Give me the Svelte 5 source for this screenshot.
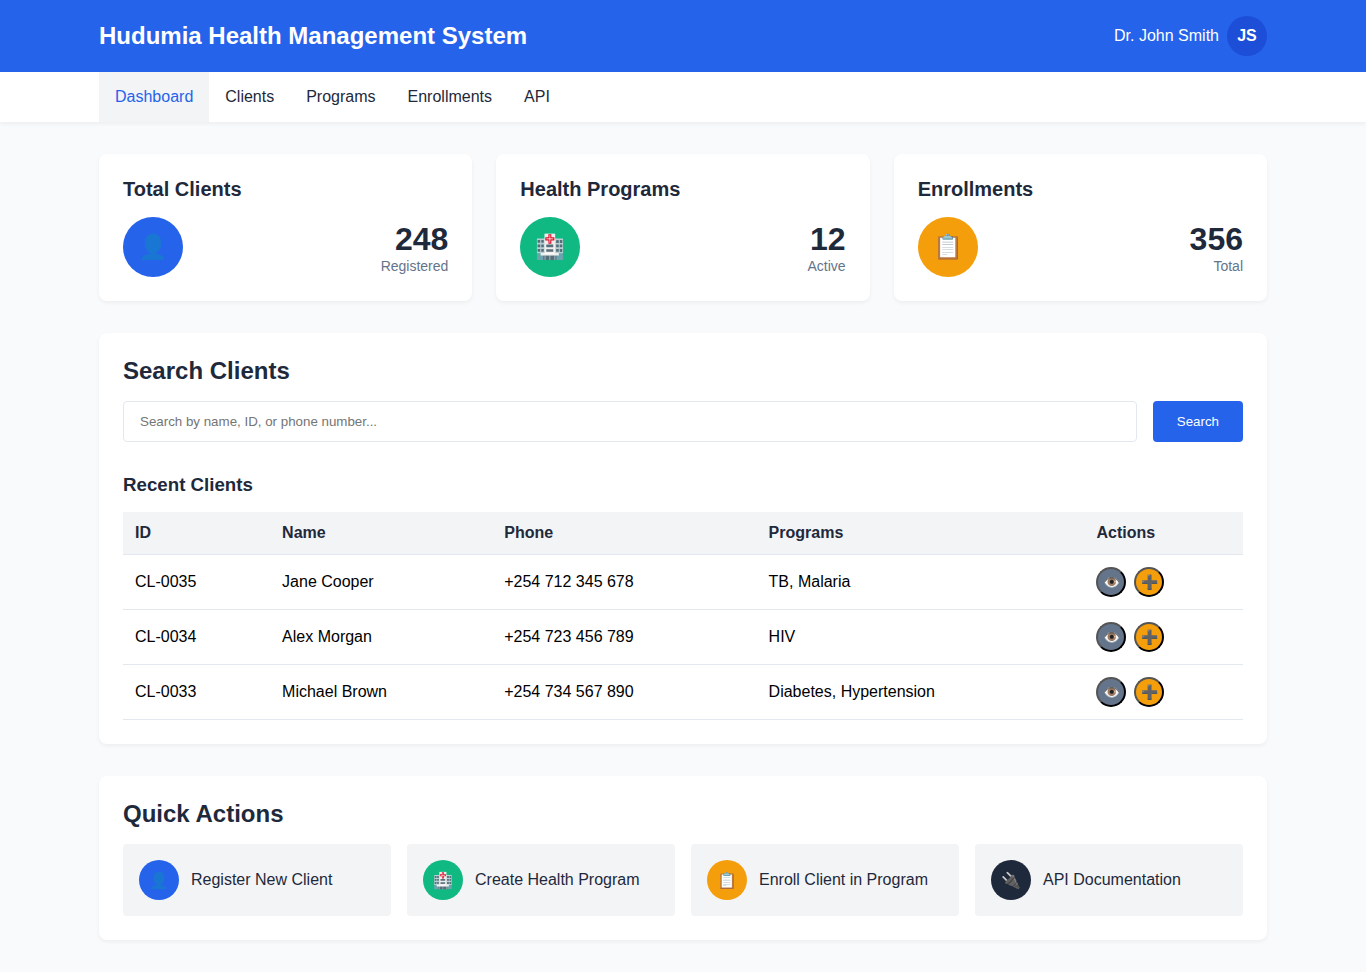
<script>
  const nav = ['Dashboard', 'Clients', 'Programs', 'Enrollments', 'API'];
  const stats = [
    { title: 'Total Clients', icon: '👤', tone: 'blue', value: 248, label: 'Registered' },
    { title: 'Health Programs', icon: '🏥', tone: 'green', value: 12, label: 'Active' },
    { title: 'Enrollments', icon: '📋', tone: 'orange', value: 356, label: 'Total' }
  ];
  const clients = [
    { id: 'CL-0035', name: 'Jane Cooper', phone: '+254 712 345 678', programs: 'TB, Malaria' },
    { id: 'CL-0034', name: 'Alex Morgan', phone: '+254 723 456 789', programs: 'HIV' },
    { id: 'CL-0033', name: 'Michael Brown', phone: '+254 734 567 890', programs: 'Diabetes, Hypertension' }
  ];
  const actions = [
    { icon: '👤', tone: 'blue', label: 'Register New Client' },
    { icon: '🏥', tone: 'green', label: 'Create Health Program' },
    { icon: '📋', tone: 'orange', label: 'Enroll Client in Program' },
    { icon: '🔌', tone: 'dark', label: 'API Documentation' }
  ];
  let query = $state('');
</script>

<header>
  <div class="container bar">
    <h1>Hudumia Health Management System</h1>
    <div class="user"><span>Dr. John Smith</span><div class="avatar">JS</div></div>
  </div>
</header>
<nav>
  <ul class="container">
    {#each nav as item, i}
      <li><a href="#{item.toLowerCase()}" class:active={i === 0}>{item}</a></li>
    {/each}
  </ul>
</nav>
<main class="container">
  <section class="stats">
    {#each stats as s}
      <article class="card">
        <h2 class="stat-title">{s.title}</h2>
        <div class="stat">
          <div class="icon large {s.tone}">{s.icon}</div>
          <div class="figures">
            <div class="value">{s.value}</div>
            <div class="label">{s.label}</div>
          </div>
        </div>
      </article>
    {/each}
  </section>

  <section class="card">
    <h2>Search Clients</h2>
    <form class="search" onsubmit={(e) => e.preventDefault()}>
      <input type="text" aria-label="Search clients" placeholder="Search by name, ID, or phone number..." bind:value={query} />
      <button type="submit">Search</button>
    </form>
    <h3>Recent Clients</h3>
    <table>
      <thead>
        <tr><th>ID</th><th>Name</th><th>Phone</th><th>Programs</th><th>Actions</th></tr>
      </thead>
      <tbody>
        {#each clients as c}
          <tr>
            <td>{c.id}</td><td>{c.name}</td><td>{c.phone}</td><td>{c.programs}</td>
            <td>
              <div class="row-actions">
                <button class="round view" aria-label="View {c.name}">👁️</button>
                <button class="round add" aria-label="Enroll {c.name}">➕</button>
              </div>
            </td>
          </tr>
        {/each}
      </tbody>
    </table>
  </section>

  <section class="card">
    <h2>Quick Actions</h2>
    <div class="quick">
      {#each actions as a}
        <a href="#{a.tone}" class="action"><span class="icon {a.tone}">{a.icon}</span><span>{a.label}</span></a>
      {/each}
    </div>
  </section>
</main>

<style>
  :global(body) {
    margin: 0;
    background: #f8fafc;
    color: #1e293b;
    font-family: "Liberation Sans", Arial, sans-serif;
    font-size: 16px;
  }
  * { box-sizing: border-box; }
  h1, h2, h3, ul { margin: 0; }
  a { color: inherit; text-decoration: none; }
  .container { max-width: 1200px; margin: 0 auto; padding: 0 16px; }
  header { background: #2563eb; color: #fff; padding: 16px 0; }
  .bar { display: flex; align-items: center; justify-content: space-between; }
  h1 { font-size: 24px; }
  .user { display: flex; align-items: center; gap: 8px; }
  .avatar {
    display: flex; align-items: center; justify-content: center;
    width: 40px; height: 40px; border-radius: 50%;
    background: #1d4ed8; font-weight: bold;
  }
  nav { background: #fff; box-shadow: 0 2px 4px rgba(0, 0, 0, 0.05); }
  nav ul { display: flex; list-style: none; }
  nav a { display: block; padding: 16px; line-height: 18px; }
  nav a.active { background: #f3f4f6; color: #2563eb; }
  main { display: flex; flex-direction: column; gap: 32px; }
  main.container { padding: 32px 16px; }
  .card { background: #fff; border-radius: 8px; padding: 24px; box-shadow: 0 2px 4px rgba(0, 0, 0, 0.05); }
  .stats { display: grid; grid-template-columns: repeat(3, 1fr); gap: 24px; }
  h2 { font-size: 24px; line-height: 28px; margin-bottom: 16px; }
  .stat-title { font-size: 20px; line-height: 23px; }
  .stat { display: flex; align-items: center; justify-content: space-between; }
  .icon {
    display: flex; flex-shrink: 0; align-items: center; justify-content: center;
    width: 40px; height: 40px; border-radius: 50%; color: #fff;
  }
  .large { width: 60px; height: 60px; font-size: 24px; }
  .blue { background: #2563eb; }
  .green { background: #10b981; }
  .orange { background: #f59e0b; }
  .dark { background: #1e293b; }
  .figures { text-align: right; }
  .value { font-size: 32px; font-weight: bold; }
  .label { font-size: 14px; color: #64748b; }
  .search { display: flex; gap: 16px; margin-bottom: 32px; }
  .search input {
    flex: 1; min-width: 0; padding: 12px 16px; border: 1px solid #e2e8f0; border-radius: 4px;
    font-family: inherit;
  }
  .search button {
    padding: 12px 24px; border: 0; border-radius: 4px; background: #2563eb; color: #fff;
    font-family: inherit;
  }
  h3 { line-height: 22px; margin-bottom: 16px; }
  table { width: 100%; border-collapse: collapse; color: #000; }
  th, td { padding: 12px; text-align: left; border-bottom: 1px solid #e2e8f0; }
  th { background: #f3f4f6; color: #1e293b; }
  .row-actions { display: flex; gap: 8px; }
  .round {
    display: flex; align-items: center; justify-content: center;
    width: 30px; height: 30px; border-radius: 50%; padding: 1px 6px; color: #fff;
    font-size: 14px;
  }
  .round { border-color: #000; }
  .view { background: #64748b; }
  .add { background: #f59e0b; }
  .quick { display: grid; grid-template-columns: repeat(4, 1fr); gap: 16px; }
  .action { display: flex; align-items: center; gap: 12px; padding: 16px; border-radius: 4px; background: #f3f4f6; }
</style>
